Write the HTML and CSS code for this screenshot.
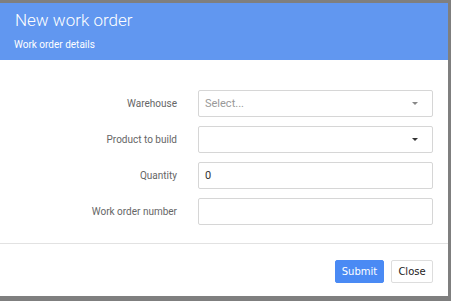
FILE: index.html
```html
<!DOCTYPE html>
<html lang="en">
  <head>
    <meta charset="UTF-8" />
    <title>New work order</title>
    <link rel="stylesheet" href="styles.css">
  </head>
  <body>
    <div class="modal">
      <div class="modal-header">
        <h1>New work order</h1>
        <p>Work order details</p>
      </div>
      <div class="modal-body">
        <div class="row">
          <label>Warehouse</label>
          <div class="field select placeholder">Select...<span class="caret light"></span></div>
        </div>
        <div class="row">
          <label>Product to build</label>
          <div class="field select"><span class="caret"></span></div>
        </div>
        <div class="row">
          <label>Quantity</label>
          <div class="field">0</div>
        </div>
        <div class="row">
          <label>Work order number</label>
          <div class="field"></div>
        </div>
      </div>
      <div class="modal-footer">
        <button class="btn primary">Submit</button>
        <button class="btn close">Close</button>
      </div>
    </div>
  </body>
</html>
```

FILE: styles.css
```css
* {
  margin: 0;
  padding: 0;
  box-sizing: border-box;
}
body {
  background-color: #7f7f7f;
  font-family: Roboto, "Liberation Sans", sans-serif;
  height: 301px;
  overflow: hidden;
}
.modal {
  margin-top: 3px;
  width: 448px;
  height: 293px;
  background-color: white;
  display: flex;
  flex-direction: column;
}
.modal-header {
  background-color: #6197f0;
  color: white;
  height: 57px;
  padding: 7px 15px 0 15px;
}
.modal-header h1 {
  font-size: 17px;
  font-weight: 300;
  line-height: 20px;
}
.modal-header p {
  font-size: 10px;
  margin-top: 9px;
  margin-left: -1px;
}
.modal-body {
  padding-top: 30px;
  display: flex;
  flex-direction: column;
  gap: 9px;
  height: 184px;
  border-bottom: 1px solid #e2e2e2;
}
.row {
  display: flex;
  align-items: center;
}
.row label {
  width: 177px;
  text-align: right;
  font-size: 10px;
  color: #666;
  margin-right: 21px;
}
.field {
  width: 235px;
  height: 27px;
  border: 1px solid #d6d6d6;
  border-radius: 2px;
  font-size: 11px;
  color: #333;
  padding: 0 6px;
  display: flex;
  align-items: center;
}
.placeholder {
  color: #999;
}
.select {
  position: relative;
}
.caret {
  position: absolute;
  right: 14px;
  top: 11px;
  border-left: 3px solid transparent;
  border-right: 3px solid transparent;
  border-top: 3px solid #333;
}
.caret.light {
  border-top-color: #888;
}
.modal-footer {
  display: flex;
  justify-content: flex-end;
  gap: 7px;
  padding: 16px 15px 0 0;
}
.btn {
  font-family: "DejaVu Sans", sans-serif;
  font-size: 10px;
  height: 23px;
  border: 1px solid #ddd;
  border-radius: 2px;
  background-color: white;
  color: #222;
}
.btn.primary {
  background-color: #4a8af4;
  border-color: #4a8af4;
  color: white;
  width: 49px;
}
.btn.close {
  width: 42px;
}
```
